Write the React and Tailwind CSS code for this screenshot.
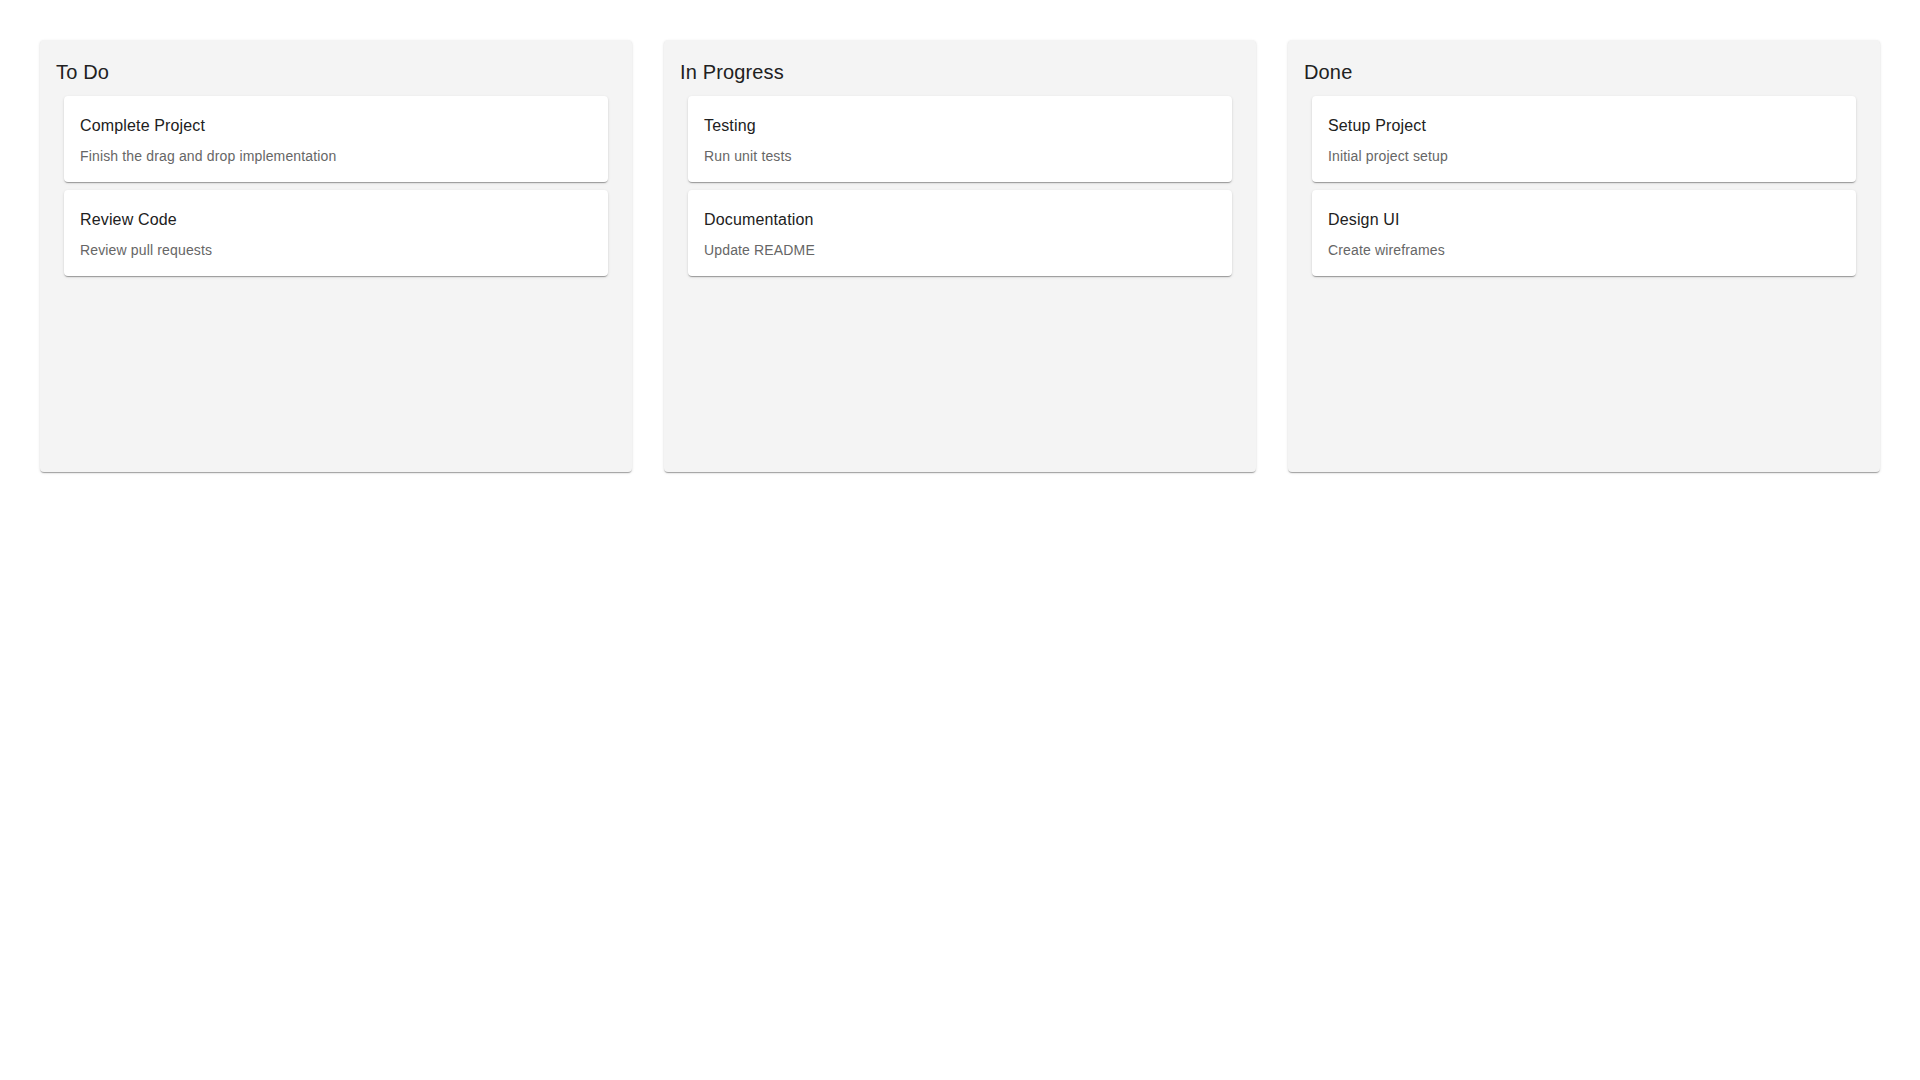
import React from 'react';

const columns = [
  {
    id: 'todo',
    title: 'To Do',
    tasks: [
      { id: 't1', title: 'Complete Project', description: 'Finish the drag and drop implementation' },
      { id: 't2', title: 'Review Code', description: 'Review pull requests' },
    ],
  },
  {
    id: 'progress',
    title: 'In Progress',
    tasks: [
      { id: 't3', title: 'Testing', description: 'Run unit tests' },
      { id: 't4', title: 'Documentation', description: 'Update README' },
    ],
  },
  {
    id: 'done',
    title: 'Done',
    tasks: [
      { id: 't5', title: 'Setup Project', description: 'Initial project setup' },
      { id: 't6', title: 'Design UI', description: 'Create wireframes' },
    ],
  },
];

const paperShadow =
  'shadow-[0px_2px_1px_-1px_rgba(0,0,0,0.2),0px_1px_1px_0px_rgba(0,0,0,0.14),0px_1px_3px_0px_rgba(0,0,0,0.12)]';

const TaskCard = ({ task }) => (
  <div className={`bg-white rounded px-4 pt-[18px] pb-4 mb-2 ${paperShadow}`}>
    <div className="text-base leading-6 tracking-[0.15px] text-[#212121] mb-2">{task.title}</div>
    <div className="text-sm leading-5 tracking-[0.15px] text-[#666666]">{task.description}</div>
  </div>
);

const Column = ({ column }) => (
  <div className={`bg-[#f4f4f4] rounded p-4 h-[432px] ${paperShadow}`}>
    <h2 className="text-xl leading-8 tracking-[0.15px] font-normal text-[#212121]">{column.title}</h2>
    <div className="p-2">
      {column.tasks.map((task) => (
        <TaskCard key={task.id} task={task} />
      ))}
    </div>
  </div>
);

export default function App() {
  return (
    <div
      className="min-h-screen bg-white p-10"
      style={{ fontFamily: '"Liberation Sans", Arial, Helvetica, sans-serif' }}
    >
      <div className="grid grid-cols-3 gap-8">
        {columns.map((column) => (
          <Column key={column.id} column={column} />
        ))}
      </div>
    </div>
  );
}
